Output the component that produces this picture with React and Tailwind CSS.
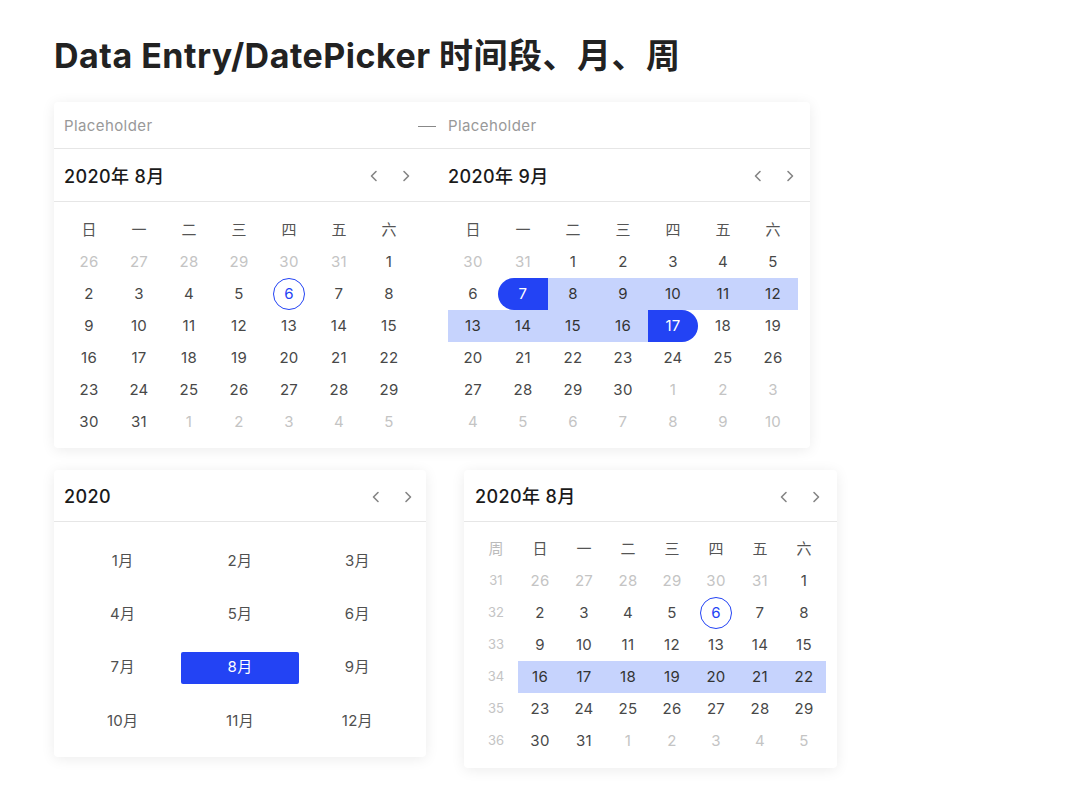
import React from 'react';

const FONT = "font-['Inter','Noto_Sans_CJK_SC',sans-serif]";
const WEEK = ['日', '一', '二', '三', '四', '五', '六'];

const Chevrons = () => (
    <div className="flex items-center gap-4 text-[#858585]">
        <svg width="16" height="16" viewBox="0 0 16 16" fill="none">
            <path d="M10 3.5 L5.5 8 L10 12.5" stroke="currentColor" strokeWidth="1.6" strokeLinecap="round" strokeLinejoin="round" />
        </svg>
        <svg width="16" height="16" viewBox="0 0 16 16" fill="none">
            <path d="M6 3.5 L10.5 8 L6 12.5" stroke="currentColor" strokeWidth="1.6" strokeLinecap="round" strokeLinejoin="round" />
        </svg>
    </div>
);

// build 6 rows of {d, cur}
const monthDays = (prevLast, startDow, total) => {
    const out = [];
    for (let i = startDow - 1; i >= 0; i--) out.push({ d: prevLast - i, cur: false });
    for (let d = 1; d <= total; d++) out.push({ d, cur: true });
    let n = 1;
    while (out.length < 42) out.push({ d: n++, cur: false });
    return out;
};

const aug = monthDays(31, 6, 31);
const sep = monthDays(31, 2, 30);

const DayCell = ({ day, today, range, start, end, w = 'w-[50px]' }) => {
    let cls = `${w} h-8 flex items-center justify-center text-[15px] tracking-[0.3px] `;
    if (start) cls += 'bg-[#2343f4] text-white rounded-l-full';
    else if (end) cls += 'bg-[#2343f4] text-white rounded-r-full';
    else if (range) cls += 'bg-[#c6d3fd] text-[#333]';
    else cls += day.cur ? 'text-[#484848]' : 'text-[#c4c4c4]';
    return (
        <div className={cls}>
            {today ? (
                <span className="w-8 h-8 rounded-full border border-[#2343f4] text-[#2343f4] flex items-center justify-center">{day.d}</span>
            ) : day.d}
        </div>
    );
};

const Title = ({ children }) => (
    <span className="text-[18px] font-medium tracking-[0.4px] text-[#1a1a1a]">{children}</span>
);

const RangePicker = () => (
    <div className="w-[756px] bg-white rounded-[4px] shadow-[0_2px_14px_rgba(0,0,0,0.08)]">
        <div className="h-[47px] flex items-center pl-[10px] pt-[2px] border-b border-[#e6e6e6] text-[15px] tracking-[0.4px] text-[#999]">
            <span className="w-[354px]">Placeholder</span>
            <span className="w-[18px] h-px bg-[#888]"></span>
            <span className="ml-[12px]">Placeholder</span>
        </div>
        <div className="h-[53px] flex items-center gap-[34px] pl-[10px] pt-[2px] border-b border-[#e6e6e6]">
            <div className="w-[350px] flex items-center justify-between">
                <Title>2020年 8月</Title>
                <Chevrons />
            </div>
            <div className="w-[350px] flex items-center justify-between">
                <Title>2020年 9月</Title>
                <Chevrons />
            </div>
        </div>
        <div className="flex gap-[34px] pl-[10px] pt-[12px] pb-[10px]">
            <div className="w-[350px] grid grid-cols-7">
                {WEEK.map((w) => (
                    <div key={w} className="h-8 flex items-center justify-center text-[15px] text-[#555]">{w}</div>
                ))}
                {aug.map((day, i) => (
                    <DayCell key={i} day={day} today={day.cur && day.d === 6} />
                ))}
            </div>
            <div className="w-[350px] grid grid-cols-7">
                {WEEK.map((w) => (
                    <div key={w} className="h-8 flex items-center justify-center text-[15px] text-[#555]">{w}</div>
                ))}
                {sep.map((day, i) => (
                    <DayCell
                        key={i}
                        day={day}
                        start={day.cur && day.d === 7}
                        end={day.cur && day.d === 17}
                        range={day.cur && day.d > 7 && day.d < 17}
                    />
                ))}
            </div>
        </div>
    </div>
);

const MonthPicker = () => (
    <div className="w-[372px] bg-white rounded-[4px] shadow-[0_2px_14px_rgba(0,0,0,0.08)]">
        <div className="h-[52px] flex items-center justify-between px-[10px] pt-[2px] border-b border-[#e6e6e6]">
            <Title>2020</Title>
            <Chevrons />
        </div>
        <div className="grid grid-cols-3 gap-y-[21.3px] px-[10px] pt-[23px] pb-[20px]">
            {Array.from({ length: 12 }, (_, i) => i + 1).map((m) => (
                <div
                    key={m}
                    className={`h-8 flex items-center justify-center text-[15px] tracking-[0.3px] rounded-[2px] ${m === 8 ? 'bg-[#2343f4] text-white' : 'text-[#505050]'}`}
                >
                    {m}月
                </div>
            ))}
        </div>
    </div>
);

const WeekPicker = () => {
    const rows = [0, 1, 2, 3, 4, 5].map((r) => aug.slice(r * 7, r * 7 + 7));
    return (
        <div className="w-[373px] bg-white rounded-[4px] shadow-[0_2px_14px_rgba(0,0,0,0.08)]">
            <div className="h-[52px] flex items-center justify-between pl-[11px] pr-[13px] pt-[2px] border-b border-[#e6e6e6]">
                <Title>2020年 8月</Title>
                <Chevrons />
            </div>
            <div className="pl-[10px] pt-[11px] pb-[11px]">
                <div className="flex">
                    <div className="w-[44px] h-8 flex items-center justify-center text-[15px] text-[#bbb]">周</div>
                    {WEEK.map((w) => (
                        <div key={w} className="w-[44px] h-8 flex items-center justify-center text-[15px] text-[#555]">{w}</div>
                    ))}
                </div>
                {rows.map((row, r) => (
                    <div key={r} className="flex">
                        <div className="w-[44px] h-8 flex items-center justify-center text-[13px] text-[#c4c4c4]">{31 + r}</div>
                        {row.map((day, i) => (
                            <DayCell
                                key={i}
                                w="w-[44px]"
                                day={day}
                                today={day.cur && day.d === 6}
                                range={r === 3}
                            />
                        ))}
                    </div>
                ))}
            </div>
        </div>
    );
};

export default function App() {
    return (
        <div className={`min-h-[800px] bg-white pl-[54px] pt-[36px] ${FONT}`}>
            <h1 className="text-[34px] leading-[40px] font-bold tracking-[0.5px] text-[#222] mb-[26px]">
                Data Entry/DatePicker 时间段、月、周
            </h1>
            <RangePicker />
            <div className="flex items-start gap-[38px] mt-[22px]">
                <MonthPicker />
                <WeekPicker />
            </div>
        </div>
    );
}
